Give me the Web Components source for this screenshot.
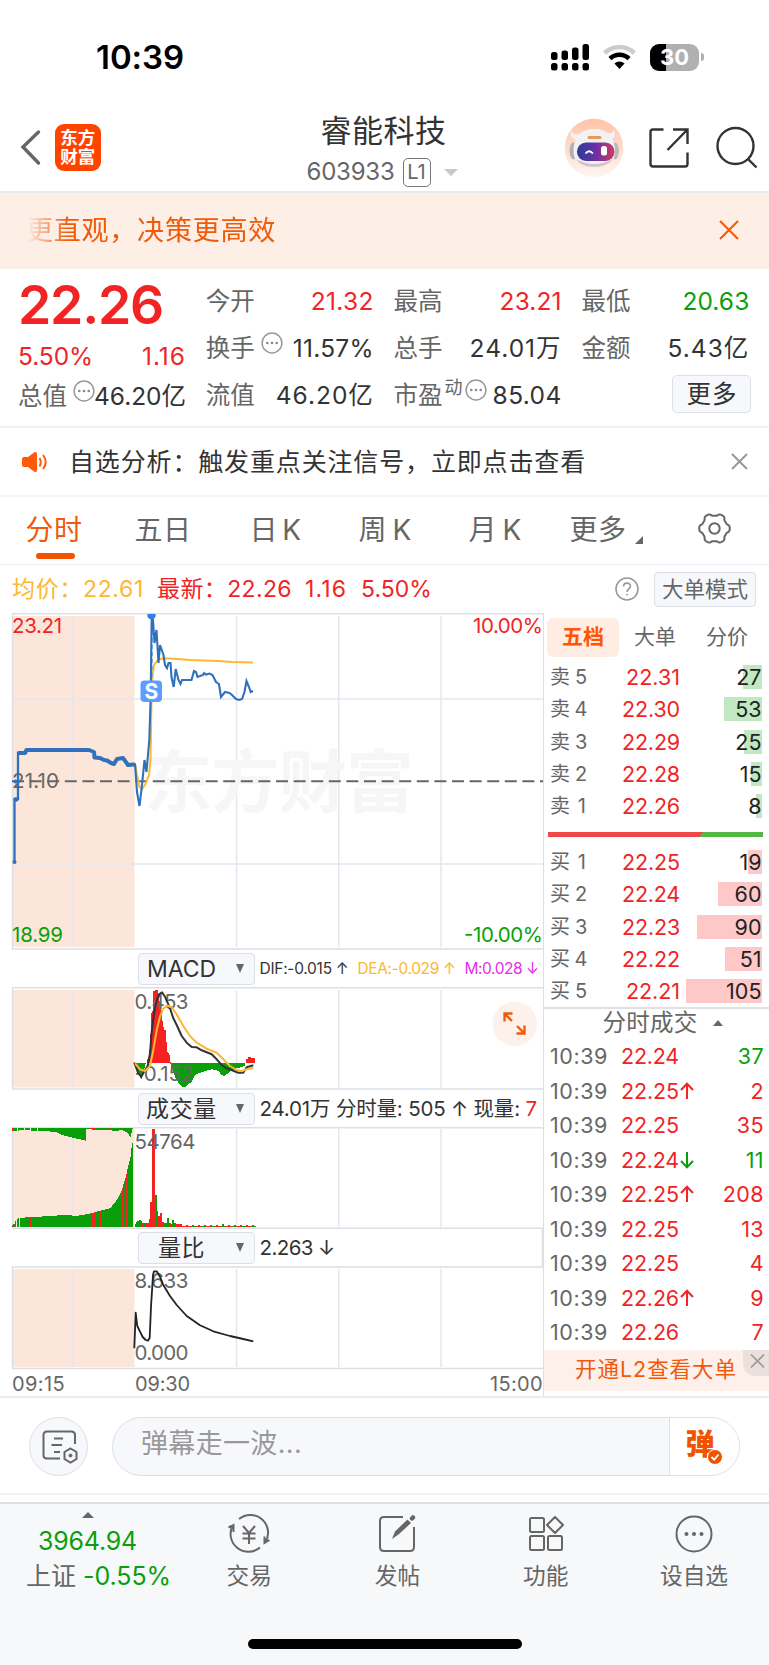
<!DOCTYPE html>
<html lang="zh-CN">
<head>
<meta charset="utf-8">
<title>睿能科技 603933</title>
<style>
html,body{margin:0;padding:0;background:#fff}
body{width:769px;height:1665px;overflow:hidden;font-family:Inter,"Noto Sans CJK SC",sans-serif;color:#333;
 --red:#f02424;--green:#0a9f0a;--orange:#f05a0a;--line:#dfe1e8;--grey:#666}
</style>
</head>
<body>
<stock-page></stock-page>
<script>
const define=(name,html,extra)=>{
  const t=document.createElement('template');
  t.innerHTML='<style>*{box-sizing:border-box}svg{display:block;overflow:visible}</style>'+html;
  customElements.define(name,class extends HTMLElement{
    connectedCallback(){
      if(this.shadowRoot)return;
      const r=this.attachShadow({mode:'open'});
      const f=t.content.cloneNode(true);
      if(extra)extra(this,f);
      r.appendChild(f);
    }
  });
};

/* Text tracked so that its box has the given width */
customElements.define('fit-text',class extends HTMLElement{
  connectedCallback(){
    if(!this.shadowRoot)this.attachShadow({mode:'open'}).innerHTML='<style>:host{display:inline-block;white-space:pre;flex:none;justify-self:start}</style><slot></slot>';
    const w=+this.getAttribute('w');
    if(!w)return;
    this.style.letterSpacing='0px';
    const n=[...this.textContent].length;
    this.style.letterSpacing=((w-this.getBoundingClientRect().width)/n)+'px';
  }
});

define('status-bar',`<style>
:host{display:flex;height:95px;padding:19px 70px 0 96px;justify-content:space-between;align-items:center;color:#000}
.t{font-size:33px;font-weight:600;line-height:40px}
.r{display:flex;align-items:center;gap:14px}
.b{position:relative;width:49px;height:27px;border-radius:9px;background:linear-gradient(90deg,#000 15.5px,#b0b0b0 15.5px);color:#fff;font-size:22px;font-weight:700;line-height:27px;text-align:center}
.b i{position:absolute;right:-5px;top:9px;width:3px;height:8px;border-radius:0 4px 4px 0;background:#b0b0b0}
</style>
<div class="t"><fit-text w="88">10:39</fit-text></div>
<div class="r">
<svg width="38" height="27" viewBox="0 0 38 27"><rect x="0" y="8" width="6.5" height="8" rx="2.5"/><rect x="10.5" y="6.500" width="6.500" height="9.500" rx="2.500"/><rect x="21" y="3.500" width="6.500" height="12.500" rx="2.500"/><rect x="31.500" y="0" width="6.500" height="16" rx="2.500"/><rect x="0" y="19" width="6.500" height="7.500" rx="2.500"/><rect x="10.500" y="19" width="6.500" height="7.500" rx="2.500"/><rect x="21" y="19" width="6.500" height="7.500" rx="2.500"/><rect x="31.500" y="19" width="6.500" height="7.500" rx="2.500"/></svg>
<svg width="33" height="26" viewBox="0 0 33 26"><path d="M1.700 9.200A21 21 0 0 1 31.300 9.200" fill="none" stroke="#ccc" stroke-width="4.500"/><path d="M7 14.600A13.600 13.600 0 0 1 26 14.600" fill="none" stroke="#000" stroke-width="4.500"/><path d="M11.400 19.500Q16.500 15.500 21.600 19.500L16.500 25Z"/></svg>
<div class="b">30<i></i></div>
</div>`);

define('title-bar',`<style>
:host{display:grid;grid-template-columns:200px 1fr 200px;height:98px;border-bottom:2px solid #e9e9ed;align-items:start}
.l{display:flex;padding:29px 0 0 20px;gap:13px;align-items:center}
.logo{width:46.5px;height:46.5px;border-radius:9px;background:#ff4400;color:#fff;font-size:17.5px;font-weight:700;line-height:19px;padding:4px 0;text-align:center;margin-left:-.5px}
.c{display:flex;flex-direction:column;align-items:center;padding-top:18px}
.n{font-size:31px;line-height:36px;color:#333;margin-left:-2px}
.s{display:flex;align-items:center;color:#666;font-size:24px;line-height:30px;margin-top:7px;gap:8px;margin-left:-5px;height:30px;padding-top:2px}
.l1{border:1.5px solid #777;border-radius:5px;width:28px;height:29px;line-height:27px;font-size:20px;text-align:center}
.tri{border:7px solid transparent;border-top-color:#c8c8c8;border-bottom:0;margin-left:5px}
.r{display:flex;padding:23px 0 0;margin-left:-5.5px;gap:25.500px;align-items:center}
</style>
<div class="l"><svg width="22" height="36" viewBox="0 0 22 36"><path d="M18.500 3L3 18 18.500 34" fill="none" stroke="#666" stroke-width="3.400" stroke-linecap="round"/></svg>
<div class="logo">东方<br>财富</div></div>
<div class="c"><div class="n"><fit-text w="126">睿能科技</fit-text></div>
<div class="s"><fit-text w="88">603933</fit-text><span class="l1">L1</span><span class="tri"></span></div></div>
<div class="r">
<svg width="60" height="60" viewBox="0 0 60 60"><defs><linearGradient id="g" x1="0" y1="0" x2="0" y2="1"><stop offset="0" stop-color="#ffc3a8"/><stop offset="1" stop-color="#fff6f1"/></linearGradient><linearGradient id="v"><stop offset="0" stop-color="#2b3b96"/><stop offset=".5" stop-color="#6a31a8"/><stop offset="1" stop-color="#d33a5c"/></linearGradient></defs>
<circle cx="30" cy="30" r="29.300" fill="url(#g)"/><path d="M7 12Q5 20 13 23L19 15Q9 19 7 12ZM50 12Q53 20 46 22L39 14Q48 18 50 12Z" fill="#f4f0f4"/><ellipse cx="9.500" cy="33" rx="4" ry="8.500" fill="#b5afb6"/><ellipse cx="51" cy="33" rx="4" ry="8.500" fill="#bdb7be"/><path d="M9.500 31Q11 11 30 11T51 31Q52 42 44 45.500 30 51 16 45.500 9 42 9.500 31Z" fill="#f3f1f4"/><path d="M12 41Q30 51 49 41Q43 49 30 49T12 41Z" fill="#ccc6cf"/><rect x="13" y="24.500" width="37.500" height="18.500" rx="9" fill="url(#v)"/><path d="M21.500 35.500Q25 31 29 35.500" fill="none" stroke="#fff" stroke-width="1.800"/><rect x="37" y="28" width="6" height="9.500" rx="2.500" fill="#fff"/><rect x="23.500" y="18" width="14" height="3" rx="1.500" fill="#e79a58"/></svg>
<svg width="40" height="40" viewBox="0 0 40 40" fill="none" stroke="#333" stroke-width="2.400"><path d="M14.500 1.500H4Q1.500 1.500 1.500 4V36Q1.500 38.500 4 38.500H36Q38.500 38.500 38.500 36V24.500M24 1.500H38.500V16M38 2L18.500 22"/></svg>
<svg width="44" height="42" viewBox="0 0 44 42" fill="none" stroke="#333" stroke-width="2.400"><circle cx="20.500" cy="19" r="18"/><path d="M33 32L41.500 40.500"/></svg>
</div>`);

define('notice-bar',`<style>
:host{display:flex;height:76px;background:#fdeee6;align-items:center;justify-content:space-between;padding:0 30px 1px 26px;color:var(--orange);font-size:27px;line-height:40px}
.m{-webkit-mask:linear-gradient(90deg,transparent 1px,#000 42px);mask:linear-gradient(90deg,transparent 1px,#000 42px)}
</style><div class="m"><fit-text w="250">更直观，决策更高效</fit-text></div>
<svg width="20" height="20" viewBox="0 0 20 20"><path d="M1 0L19 18M19 0L1 18" stroke="#f05a0a" stroke-width="2"/></svg>`);

const DOT='<svg width="22" height="22" viewBox="0 0 22 22"><circle cx="11" cy="11" r="9.900" fill="none" stroke="#999" stroke-width="1.500"/><g fill="#888"><circle cx="6.300" cy="11" r="1.300"/><circle cx="11" cy="11" r="1.300"/><circle cx="15.700" cy="11" r="1.300"/></g></svg>';
define('quote-grid',`<style>
:host{display:grid;grid-template-columns:repeat(4,168px);column-gap:19.8px;padding:8px 0 0 18px;height:159px;border-bottom:2px solid #f2f2f4;font-size:24.5px;line-height:30px}
.col{display:grid;grid-template-rows:47px 47px 47px}
.col>div{display:flex;justify-content:space-between;align-items:center}
.col.first{grid-template-rows:56px 45px 40px}
.k{color:#666}.red{color:var(--red)}.green{color:var(--green)}
.big{font-size:53.5px;font-weight:600;line-height:56px}
.g{display:flex;align-items:center}.g svg{margin:-10px 0 0 6px}
sup{font-size:18px;line-height:20px;margin:-13px 0 0 2px;color:#666}
.g sup+svg{margin-left:2px}
.btn{width:79px;height:38px;border:1.5px solid #dcdfe6;border-radius:5px;background:#f7f8fb;line-height:36px;text-align:center;margin:-2px -2px 0 auto}
</style>
<div class="col first"><div class="big red"><fit-text w="145">22.26</fit-text></div>
<div class="red"><fit-text w="75">5.50%</fit-text><fit-text w="44">1.16</fit-text></div>
<div style="margin-top:-4px"><span class="g"><span class="k">总值</span>${DOT}</span><fit-text w="92" style="margin-left:-4px">46.20亿</fit-text></div></div>
<div class="col"><div><span class="k">今开</span><fit-text class="red" w="63">21.32</fit-text></div>
<div><span class="g"><span class="k">换手</span>${DOT}</span><fit-text w="81">11.57%</fit-text></div>
<div><span class="k">流值</span><fit-text w="98">46.20亿</fit-text></div></div>
<div class="col"><div><span class="k">最高</span><fit-text class="red" w="62">23.21</fit-text></div>
<div><span class="k">总手</span><fit-text w="92">24.01万</fit-text></div>
<div><span class="g"><span class="k">市盈</span><sup>动</sup>${DOT}</span><fit-text w="69">85.04</fit-text></div></div>
<div class="col"><div><span class="k">最低</span><fit-text class="green" w="67">20.63</fit-text></div>
<div><span class="k">金额</span><fit-text w="82">5.43亿</fit-text></div>
<div><div class="btn"><fit-text w="51">更多</fit-text></div></div></div>`);

define('alert-row',`<style>
:host{display:flex;height:69px;border-bottom:2px solid #f4f4f6;align-items:center;padding:0 21px 0 22px;font-size:25px;line-height:36px}
fit-text{margin-left:21px}.x{margin-left:auto}
</style><svg width="26" height="22" viewBox="0 0 26 22"><path d="M0 8Q0 6 2 6H6L12 1.500Q15 0 15 3V19Q15 22 12 20.500L6 16H2Q0 16 0 14Z" fill="#ff5a0a"/><path d="M17.500 7Q20 11 17.500 15.500M21 4Q26.500 11 21 18" fill="none" stroke="#ff5a0a" stroke-width="2"/></svg>
<fit-text w="517">自选分析：触发重点关注信号，立即点击查看</fit-text>
<svg class="x" width="17" height="17" viewBox="0 0 17 17"><path d="M1 1L16 16M16 1L1 16" stroke="#999" stroke-width="2"/></svg>`);

define('period-tabs',`<style>
:host{display:grid;grid-template-columns:108px 110px 113px 107px 113px 110px 106px;height:68px;border-bottom:1.500px solid #eeeff2;color:#666;font-size:28px;line-height:36px;align-items:start}
div{display:flex;justify-content:center;height:66px;padding-top:15px;position:relative}
.on{color:var(--orange)}.on:after{content:"";position:absolute;left:35.500px;bottom:4px;width:39px;height:6px;border-radius:3px;background:#f05400}
.more:after{content:"";align-self:flex-start;margin:24px 0 0 8px;border:4px solid transparent;border-right-color:#666;border-bottom-color:#666}
</style><div class="on"><fit-text w="57">分时</fit-text></div><div><fit-text w="57">五日</fit-text></div><div><fit-text w="50">日 K</fit-text></div><div><fit-text w="52">周 K</fit-text></div><div><fit-text w="52">月 K</fit-text></div><div class="more"><fit-text w="57">更多</fit-text></div>
<div><svg width="33" height="33" viewBox="-16.500 -16.500 33 33" fill="none" stroke="#666" stroke-width="2"><path id="gear"/><circle r="5.200"/></svg></div>`,(h,f)=>{
  let d='';
  for(let i=0;i<=120;i++){const a=i/120*Math.PI*2,r=14+1.300*Math.tanh(2*Math.cos(6*a));d+=(i?'L':'M')+(r*Math.cos(a)).toFixed(2)+' '+(r*Math.sin(a)).toFixed(2);}
  f.querySelector('#gear').setAttribute('d',d+'Z');
});

define('price-line',`<style>
:host{display:flex;height:48px;align-items:center;padding:0 13px 0 12px;font-size:23px;line-height:30px;color:var(--red)}
.y{color:#fdb732;margin-right:13px}.q{margin-left:auto;margin-right:15px}
.btn{width:102px;height:35px;border:1.500px solid #dcdfe6;border-radius:4px;background:#f7f8fb;color:#666;font-size:21.500px;line-height:32px;text-align:center}
</style><fit-text class="y" w="132">均价：22.61</fit-text><fit-text w="135" style="margin-right:13px">最新：22.26</fit-text><fit-text w="42" style="margin-right:14px">1.16</fit-text><fit-text w="71">5.50%</fit-text>
<svg class="q" width="24" height="24" viewBox="0 0 24 24" fill="none" stroke="#999" stroke-width="1.600"><circle cx="12" cy="12" r="11"/><path d="M8.500 9.500C8.500 5 15.500 5 15.500 9.200 15.500 11.500 12 12 12 15" /><path d="M12 16.800V18.600"/></svg>
<div class="btn"><fit-text w="86">大单模式</fit-text></div>`);

/* Panes draw in page-wide coordinates through their viewBox */
const pts=(s,oy=0)=>s.trim().split(/\s+/).map(p=>{const[x,y]=p.split(',');return (x/3).toFixed(1)+','+(oy+y/3).toFixed(1)}).join(' ');
const frame=(top,bot,y1,y2)=>`<rect x="12" y="${y1}" width="122.500" height="${y2-y1}" fill="#fce6da"/><g stroke="#e3e7ee" stroke-width="1.500"><path d="M73 ${y1}V${y2}M236.500 ${y1}V${y2}M338.700 ${y1}V${y2}M441 ${y1}V${y2}"/><path d="M12 ${top}H543M12 ${bot}H543M12.500 ${top}V${bot}" stroke="#dcdfe6"/></g>`;
const css='<style>:host{display:block}text{font-family:Inter,"Noto Sans CJK SC",sans-serif;font-size:20.500px;fill:#666}</style>';

define('price-pane',css+`<svg width="531" height="337" viewBox="12 613 531 337">
${frame(613.7,949,616,947)}<path d="M12 699H543M12 864H543" stroke="#e3e7ee" stroke-width="1.500"/>
<text x="144" y="807" textLength="270" style="font-size:68px;font-weight:700;fill:#f6f6f7">东方财富</text>
<path d="M12 781.300H543" stroke="#666" stroke-width="2" stroke-dasharray="12 5.600"/>
<text x="12" y="787.500" textLength="47">21.10</text>
<polyline fill="none" stroke="#fdb732" stroke-width="2" points="135,764 137,775 139.500,787 142,789 145,785 149,775 150.500,760 151.500,700 152.500,675 154,665 158,660 162,658.500 170,658.500 190,660 218,661 232,662 253,662.500"/>
<polyline fill="none" stroke="#3070bd" stroke-width="2.300" points="14.500,862 14.500,799 18,799 18,753 25,753"/>
<g fill="#3070bd"><circle cx="14.500" cy="862" r="2"/><circle cx="16" cy="799.500" r="2.300"/><circle cx="15.500" cy="781.500" r="2"/></g>
<polyline fill="none" stroke="#3070bd" stroke-width="4" stroke-linejoin="round" stroke-linecap="round" points="19,753 25,753 26.500,750 89,750 94,752 94.500,757.500 100,758 104,760 107,760.500 111,763 114,764 117,759 123,758 128,765 134,764.500"/>
<path d="M152 617V680" stroke="#5c9dff" stroke-width="1.500" stroke-dasharray="4 3"/>
<polyline fill="none" stroke="#3070bd" stroke-width="2.100" points="135,764 137,792 139.500,806 142,785 144.500,760 146.500,772 149.300,740 150.600,700 151.700,617 153,620 154.500,643 156.500,630 158.500,663 160,645 163.500,655 165,665 167,668 168.500,663 170.500,663 171.500,677 173.700,687 175.700,669 178.500,680 180.500,684 182,680 191.500,680 194,671 196,672 197.500,677 203,675 204,673 206,674.500 209.500,673.500 212.500,675 216,682 219,684 221,697 225,692 229.500,693 232,695 236,699 239.500,700 242,699 244.500,692 246.500,681 249,687 250.700,692 253,691"/>
<path d="M147.500 614h8a4.200 4.200 0 1 1-8 0z" fill="#2f7fe8"/>
<rect x="140.500" y="680.500" width="21.500" height="21.500" rx="4" fill="#5c9dff"/><text x="151.300" y="698.500" text-anchor="middle" style="font-size:21px;font-weight:700;fill:#fff">S</text>
<text x="12" y="633" textLength="50" style="fill:#f02424">23.21</text><text x="12" y="942" textLength="51" style="fill:#0a9f0a">18.99</text>
<text x="473" y="633" textLength="70" style="fill:#f02424">10.00%</text><text x="464" y="942" textLength="79" style="fill:#0a9f0a">-10.00%</text></svg>`);

define('macd-pane',css+`<svg width="531" height="103" viewBox="12 987 531 103">${frame(987.7,1089,990,1087.5)}
<g shape-rendering="crispEdges"><polygon fill="#0a9f0a" points="${pts('405,310 412,330 418,345 424,361 428,345 433,325 437,310',960)}"/><polygon fill="#0a9f0a" points="${pts('511,310 515,325 525,350 533,365 540,375 548,382 556,380 565,372 575,366 583,350 590,342 610,335 635,328 655,332 662,342 672,350 680,343 690,335 710,325 735,318 735,310',960)}"/>
<polygon fill="#f52222" points="${pts('440,310 440,303 447,288 451,240 454,160 460,150 460,93 473,90 476,120 482,125 482,148 487,150 487,180 492,210 497,210 497,245 502,247 502,275 508,280 512,310',960)}"/><polygon fill="#f52222" points="${pts('738,308 738,297 744,297 744,291 754,291 754,294 765,295 765,308',960)}"/></g>
<text x="134.500" y="1009" textLength="54">0.453</text><text x="134.500" y="1081" textLength="59">-0.152</text>
<polyline fill="none" stroke="#333" stroke-width="2" stroke-linejoin="round" points="${pts('403,308 415,340 424,350 432,335 443,318 450,280 455,215 462,160 470,120 478,102 486,97 495,110 510,145 520,175 530,195 545,228 560,248 575,261 590,262 605,271 635,283 650,298 665,315 680,325 700,332 715,338 730,338 740,322 760,316',960)}"/>
<polyline fill="none" stroke="#fdb732" stroke-width="2" stroke-linejoin="round" points="${pts('405,310 420,328 435,333 450,318 460,270 470,210 480,170 490,145 503,137 515,142 530,163 550,198 570,228 590,248 620,266 650,278 670,298 690,318 710,330 725,334 740,328 760,323',960)}"/>
<circle cx="514.700" cy="1023.700" r="22.300" fill="#fdf1eb"/><path d="M504.500 1021.500V1013.500H512.500M504.800 1013.800L512 1021M524.500 1025.500V1033.500H516.500M524.200 1033.200L517 1026" fill="none" stroke="#f05a0a" stroke-width="2.300"/></svg>`);

define('volume-pane',css+`<svg width="531" height="102" viewBox="12 1127 531 102">${frame(1127.7,1228.300,1129,1227)}
<g shape-rendering="crispEdges" id="bars"></g><text x="134.500" y="1148.500" textLength="61">54764</text></svg>`,(h,f)=>{
  const R='#f52222',G='#0a9f0a';
  const at=(a,x)=>{for(let i=1;i<a.length;i++)if(x<=a[i][0]){const[p,q]=a[i-1],[r,s]=a[i];return q+(s-q)*(x-p)/(r-p)}return a[a.length-1][1]};
  const auction=[[12,2],[14,3],[16,8],[20,9],[30,10],[53,11],[60,12],[68,12],[75,11],[88,13],[95,15],[103,17],[110,19],[114,24],[117,28],[121,36],[125,49],[128,62],[130,70],[131.5,84],[134,85]];
  const hang=[[12,3],[25,2],[35,3],[45,3],[55,4],[62,7],[70,9],[78,11],[85,12.500],[86,1],[92,1.500],[105,1.500],[115,3],[122,2],[127,5],[130,9],[132,1]];
  const main=[[135,3],[137,6],[140,7],[142,4],[148,4],[150,12],[151.500,13]];
  const red=[12,13,30,92,93,94,95,100,105,113,117,122,126,131];
  let s='';const bar=(x,y,w,hh,c)=>s+=`<rect x="${x}" y="${y}" width="${w}" height="${hh}" fill="${c}"/>`;
  for(let x=12;x<133;x++){
    const v=Math.round(at(auction,x));
    if(x<16||x>16&&x!==19)bar(x,1227-v,1,v,red.includes(x)?R:G);
    if(x!==17&&x!==24&&x!==30&&x!==37)bar(x,1128,1,Math.round(at(hang,x)),(x>89&&x<96)||x<14||x===110?R:G);
  }
  for(let x=135;x<151;x++){const v=Math.round(at(main,x));bar(x,1227-v,1,v,x<141||x===144?G:R)}
  bar(150,1202,2,25,R);bar(152,1129,3,98,R);bar(155,1195,2,32,G);bar(157,1211,1,16,R);bar(158,1216,2,11,R);bar(160,1213,2,14,R);
  bar(162,1222,2,5,R);bar(164,1223,3,4,G);bar(167,1218,2,9,G);bar(169,1223,2,4,R);bar(171,1224,1,3,G);bar(172,1220,2,7,G);bar(174,1223,2,4,G);
  for(let x=176;x<255;x+=2){const v=x<182?3:x>220&&x<224?3:(x%6===0?2:1);bar(x,1227-v,2,v,(x>=182&&x<188)||(x*7%5)<3?R:G)}
  f.querySelector('#bars').innerHTML=s;
});

define('ratio-pane',css+`<svg width="531" height="104" viewBox="12 1266 531 104">${frame(1267,1368.500,1269,1367)}
<path d="M542.500 1228V1267" stroke="#dcdfe6" stroke-width="1.500"/>
<text x="134.500" y="1288" textLength="54">8.633</text><text x="134.500" y="1360" textLength="54">0.000</text>
<polyline fill="none" stroke="#222" stroke-width="1.800" stroke-linejoin="round" points="${pts('403,475 407,368 412,408 420,425 428,441 437,450 444,452 449,443 453,350 459,255 462,244 470,244 480,260 490,285 510,318 530,345 560,378 600,406 640,424 690,438 730,447 760,454',1190)}"/></svg>`);

define('indicator-row',`<style>
:host{display:flex;height:37px;align-items:center;padding-left:126px;font-size:20.500px;line-height:24px}
.b{display:flex;align-items:center;width:117px;height:32px;border:1.500px solid #dcdfe6;border-radius:4px;background:#f7f8fb;font-size:23px;color:#333;padding-right:10px;margin-right:4.500px;flex:none}
.b span{flex:1;text-align:center;padding-right:12px}
.b:after{content:"";border:4.500px solid transparent;border-top:9px solid #666;border-bottom:0}
.v{display:flex;align-items:center;white-space:pre}
</style><div class="b"><span><slot name="name"></slot></span></div><div class="v"><slot></slot></div>`);

define('time-axis',`<style>:host{display:flex;height:26px;font-size:20px;line-height:29px;color:#666}
.a{margin-right:70px}.z{margin-left:auto}</style><fit-text class="a" w="53">09:15</fit-text><fit-text w="55">09:30</fit-text><fit-text class="z" w="53">15:00</fit-text>`);

define('book-row',`<style>
:host{display:grid;grid-template-columns:40px 90px 1fr;height:32.300px;align-items:center;padding:0 7.500px 0 6px;font-size:21.500px;line-height:24px}
.k{color:#666;font-size:20px}.p{color:var(--red);text-align:right}.n{position:relative;display:flex;justify-content:flex-end;height:24px;color:#222}
.n i{position:absolute;right:-.500px;top:0;height:24px}.n span{position:relative}
</style><fit-text class="k" w="37"></fit-text><span class="p"><fit-text></fit-text></span><span class="n"><i></i><span></span></span>`,(h,f)=>{
  const g=n=>h.getAttribute(n);
  f.querySelector('.k').textContent=g('label');
  const p=f.querySelector('.p fit-text');p.textContent=g('price');p.setAttribute('w',g('price').endsWith('1')?54:58);
  const i=f.querySelector('i');i.style.width=g('bar')+'px';i.style.background=g('side')==='sell'?'#c1e8c1':'#ffc8c8';
  f.querySelector('.n span').textContent=g('count');
});

define('trade-row',`<style>
:host{display:grid;grid-template-columns:71px 58px 20px 1fr;height:34.520px;align-items:center;padding:0 5px 0 6px;font-size:21.500px;line-height:24px;color:var(--red)}
.t{color:#666}.n{text-align:right;letter-spacing:.4px}.green{color:var(--green)}
</style><fit-text class="t" w="58">10:39</fit-text><fit-text class="p" w="58"></fit-text><svg width="16" height="20" viewBox="0 0 16 20" fill="none" stroke-width="2"><path/></svg><span class="n"></span>`,(h,f)=>{
  const g=n=>h.getAttribute(n);
  f.querySelector('.p').textContent=g('price');
  const d=g('dir'),p=f.querySelector('path');
  if(d){p.setAttribute('d',d==='up'?'M8 18V2.500M2 9L8 2.800 14 9':'M8 2V17.500M2 11L8 17.200 14 11');p.setAttribute('stroke',d==='up'?'#f02424':'#0a9f0a')}
  const n=f.querySelector('.n');n.textContent=g('count');if(h.hasAttribute('sell'))n.classList.add('green');
});

define('order-book',`<style>
:host{display:flex;flex-direction:column;width:226px;height:783px;border-left:1.500px solid #dcdfe6}
.tabs{display:flex;padding:4.500px 0 0 3px;height:48px;font-size:21px;line-height:37px;color:#666}
.tabs span{width:72px;height:39px;text-align:center}.tabs .on{background:#ffece3;border-radius:6px;color:#ff5500;font-weight:700}
.split{height:5px;margin:10px 6px 8.500px 4px;background:linear-gradient(125deg,#ee4848 126.500px,#55b844 127.500px);flex:none}
.head{display:flex;align-items:center;justify-content:center;gap:15px;height:31.500px;border-top:2px solid #dfe1e6;color:#666;font-size:23.500px;line-height:28px;padding:0 4px 2px 16px;flex:none}
.head:after{content:"";border:5px solid transparent;border-bottom:6px solid #666;border-top:0}
.promo{position:relative;height:41px;background:#fdf0ea;color:var(--orange);font-size:21.500px;line-height:38px;padding-left:31px;flex:none}
.promo svg{position:absolute;right:0;top:0}
</style>
<div class="tabs"><span class="on">五档</span><span>大单</span><span>分价</span></div>
<book-row label="卖 5" price="22.31" count="27" bar="19.5" side="sell"></book-row>
<book-row label="卖 4" price="22.30" count="53" bar="38" side="sell"></book-row>
<book-row label="卖 3" price="22.29" count="25" bar="18" side="sell"></book-row>
<book-row label="卖 2" price="22.28" count="15" bar="11" side="sell"></book-row>
<book-row label="卖 1" price="22.26" count="8" bar="6" side="sell"></book-row>
<div class="split"></div>
<book-row label="买 1" price="22.25" count="19" bar="14"></book-row>
<book-row label="买 2" price="22.24" count="60" bar="44"></book-row>
<book-row label="买 3" price="22.23" count="90" bar="65"></book-row>
<book-row label="买 4" price="22.22" count="51" bar="37"></book-row>
<book-row label="买 5" price="22.21" count="105" bar="76"></book-row>
<div class="head"><fit-text w="95">分时成交</fit-text></div>
<trade-row price="22.24" count="37" sell></trade-row>
<trade-row price="22.25" dir="up" count="2"></trade-row>
<trade-row price="22.25" count="35"></trade-row>
<trade-row price="22.24" dir="down" count="11" sell></trade-row>
<trade-row price="22.25" dir="up" count="208"></trade-row>
<trade-row price="22.25" count="13"></trade-row>
<trade-row price="22.25" count="4"></trade-row>
<trade-row price="22.26" dir="up" count="9"></trade-row>
<trade-row price="22.26" count="7"></trade-row>
<div class="promo"><fit-text w="162">开通L2查看大单</fit-text><svg width="26" height="26" viewBox="0 0 26 26"><path d="M0 0H26V26H14Q0 26 0 12Z" fill="#ebe0db"/><path d="M8 4.500L21 17.500M21 4.500L8 17.500" stroke="#999" stroke-width="1.700"/></svg></div>`);

define('comment-bar',`<style>
:host{display:flex;height:99px;padding:19px 0 0 29px;gap:24px;border-top:2px solid #ebecef;border-bottom:2px solid #f3f3f5}
.c{width:59px;height:59px;border:1.500px solid #dcdfe6;border-radius:50%;background:#f7f8fb;padding:11px 0 0 12px}
.p{display:flex;width:627.500px;height:59px;border:1.500px solid #dcdfe6;border-radius:30px;background:#f7f8fb;overflow:hidden}
.i{flex:1;color:#999;font-size:27px;line-height:52px;padding-left:28px}
.d{position:relative;width:70px;background:#fff;border-left:1.500px solid #dcdfe6;color:#f05400;font-size:29px;font-weight:900;line-height:54px;padding-left:16px}
.d svg{position:absolute;left:37px;top:31px}
</style><div class="c"><svg width="36" height="36" viewBox="0 0 36 36" fill="none" stroke="#666" stroke-width="2"><path d="M18 29.500H5Q1.500 29.500 1.500 26V6Q1.500 2.500 5 2.500H29Q33 2.500 33 6V15M12 9.500H21M9.500 16H20M12 23H18"/><path d="M28.500 19.500L34.500 23V30L28.500 33.500 22.500 30V23Z"/><circle cx="28.500" cy="26.500" r="1.500" fill="#666" stroke-width="1"/></svg></div>
<div class="p"><div class="i"><fit-text w="161">弹幕走一波...</fit-text></div><div class="d">弹<svg width="16" height="16" viewBox="0 0 16 16"><circle cx="8" cy="8" r="7.500" fill="#f05400" stroke="#fff"/><path d="M4.500 8L7.200 10.700 11.500 5.500" fill="none" stroke="#fff" stroke-width="1.800"/></svg></div></div>`);

define('nav-item',`<style>
:host{display:flex;flex-direction:column;align-items:center;width:148.300px;color:#666;font-size:22.700px;line-height:30px;gap:6.500px;padding-top:10px}
</style><slot name="icon"></slot><span><slot></slot></span>`);

define('bottom-nav',`<style>
:host{display:block;margin-top:7px;height:163px;background:#f7f8fa;border-top:2px solid #dfe0e5}
.row{display:flex;height:135px}
.idx{width:175px;display:flex;flex-direction:column;align-items:center;padding-top:7.500px;font-size:25px;line-height:34px;color:var(--green)}
.idx:before{content:"";border:6.500px solid transparent;border-bottom:6.500px solid #666;border-top:0;margin-bottom:6.500px}
.idx div{display:flex;gap:7px;margin:1px 0 0 22px}.idx span{color:#666}
.home{width:274px;height:10px;border-radius:5px;background:#000;margin:0 auto}
nav-item svg{stroke:#666;fill:none;stroke-width:2}
</style><div class="row"><div class="idx"><fit-text w="99">3964.94</fit-text><div><span>上证</span><fit-text w="88">-0.55%</fit-text></div></div>
<nav-item><svg slot="icon" width="44" height="40" viewBox="0 0 44 40"><path d="M12 5A17.800 17.800 0 0 1 38.500 28M33 33.500A17.800 17.800 0 0 1 5.500 12M1.500 13.500L6.500 11V18M42.500 26L37.500 29V22.500"/><path d="M16 12L22 19 28 12M22 19V30M15.500 19.500H28.500M15.500 24.500H28.500"/></svg>交易</nav-item>
<nav-item><svg slot="icon" width="38" height="40" viewBox="0 0 38 40"><path d="M25 3H6Q2 3 2 7V33Q2 37 6 37H32Q36 37 36 33V13"/><path d="M14 25L17 17.500 29.500 5.500 33 9 20.500 20.500Z" fill="#666" stroke="none"/><path d="M34 4.500L35 3.500" stroke-width="4.500" stroke-linecap="round"/></svg>发帖</nav-item>
<nav-item><svg slot="icon" width="36" height="40" viewBox="0 0 36 40"><rect x="2" y="4" width="14" height="14" rx="1.500"/><rect x="2" y="22" width="14" height="14" rx="1.500"/><rect x="20" y="22" width="14" height="14" rx="1.500"/><path d="M27 3L35 11 27 19 19 11Z" stroke-linejoin="round"/></svg>功能</nav-item>
<nav-item><svg slot="icon" width="40" height="40" viewBox="0 0 40 40"><circle cx="20" cy="20" r="17.500"/><g fill="#666" stroke="none"><circle cx="12.500" cy="20" r="2"/><circle cx="20" cy="20" r="2"/><circle cx="27.500" cy="20" r="2"/></g></svg>设自选</nav-item></div><div class="home"></div>`);

define('stock-page',`<style>
:host{display:flex;flex-direction:column;width:769px;height:1665px;background:#fff}
:host>*{flex:none}
.main{display:flex;height:783px}
.charts{width:543px;padding-left:12px;display:flex;flex-direction:column}
.charts>*{flex:none}
.s{font-size:15.500px}.y{color:#fdb732}.m{color:#e22ee8}.red{color:#f02424}
</style>
<status-bar></status-bar><title-bar></title-bar><notice-bar></notice-bar><quote-grid></quote-grid><alert-row></alert-row><period-tabs></period-tabs><price-line></price-line>
<div class="main"><div class="charts">
<price-pane></price-pane>
<indicator-row><fit-text slot="name" w="69">MACD</fit-text><fit-text class="s" w="89" style="margin-right:9px">DIF:-0.015 ↑</fit-text><fit-text class="s y" w="98" style="margin-right:9px">DEA:-0.029 ↑</fit-text><fit-text class="s m" w="74">M:0.028 ↓</fit-text></indicator-row>
<macd-pane></macd-pane>
<indicator-row><fit-text slot="name" w="71">成交量</fit-text><fit-text w="266">24.01万 分时量: 505 ↑ 现量: </fit-text><span class="red">7</span></indicator-row>
<volume-pane></volume-pane>
<indicator-row><fit-text slot="name" w="47">量比</fit-text><fit-text w="75">2.263 ↓</fit-text></indicator-row>
<ratio-pane></ratio-pane>
<time-axis></time-axis>
</div><order-book></order-book></div>
<comment-bar></comment-bar><bottom-nav></bottom-nav>`);
</script>
</body>
</html>
